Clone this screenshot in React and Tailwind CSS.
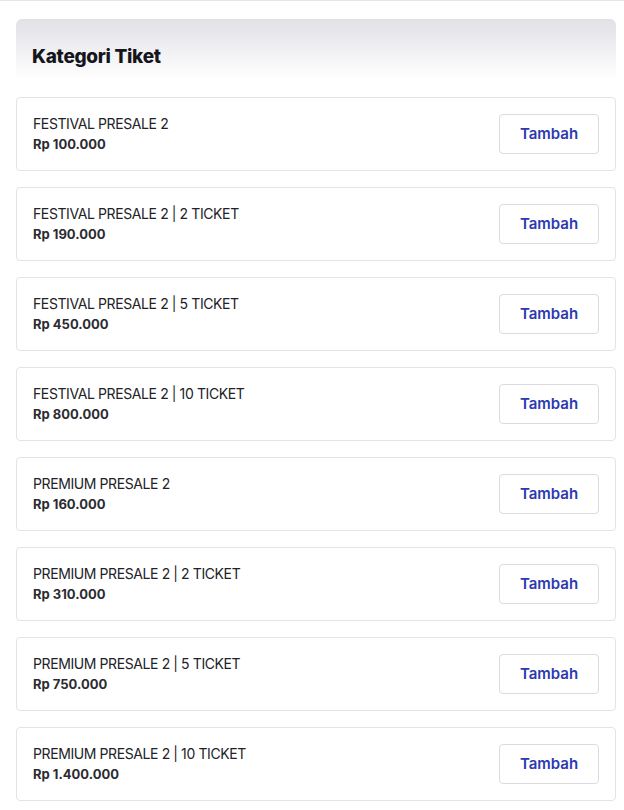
import React from "react";

const items = [
  ["FESTIVAL PRESALE 2", "Rp 100.000"],
  ["FESTIVAL PRESALE 2 | 2 TICKET", "Rp 190.000"],
  ["FESTIVAL PRESALE 2 | 5 TICKET", "Rp 450.000"],
  ["FESTIVAL PRESALE 2 | 10 TICKET", "Rp 800.000"],
  ["PREMIUM PRESALE 2", "Rp 160.000"],
  ["PREMIUM PRESALE 2 | 2 TICKET", "Rp 310.000"],
  ["PREMIUM PRESALE 2 | 5 TICKET", "Rp 750.000"],
  ["PREMIUM PRESALE 2 | 10 TICKET", "Rp 1.400.000"],
];

export default function App() {
  return (
    <div
      className="w-[624px] min-h-[810px] bg-white border-t border-[#e5e5e5] pl-4 pr-2 pt-[18px] pb-4"
      style={{ fontFamily: "Inter, 'Noto Sans', sans-serif" }}
    >
      <div className="rounded-t-md bg-gradient-to-b from-[#e1e1e6] to-white px-4 pt-6 pb-2">
        <h2 className="text-[19px] leading-7 font-extrabold text-[#15161c] tracking-[-0.3px]">Kategori Tiket</h2>
      </div>
      <div className="mt-[18px] flex flex-col gap-4">
        {items.map(([name, price]) => (
          <div
            key={name}
            className="flex items-center justify-between rounded border border-[#e4e4e7] bg-white px-4 py-4"
          >
            <div className="flex flex-col">
              <span className="text-[14px] leading-[20px] text-[#222228] tracking-[-0.4px]">{name}</span>
              <span className="text-[13px] leading-[20px] font-bold text-[#2b2b30]">{price}</span>
            </div>
            <button className="h-10 w-[100px] rounded border border-[#dcdce0] bg-white text-[15px] font-semibold text-[#2c3ab0]">
              Tambah
            </button>
          </div>
        ))}
      </div>
    </div>
  );
}
